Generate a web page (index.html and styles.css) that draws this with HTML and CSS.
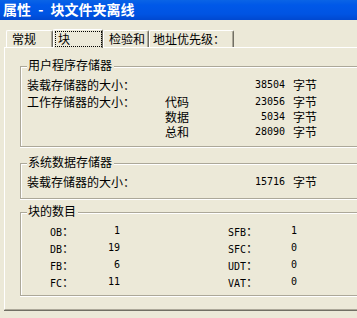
FILE: index.html
```html
<!DOCTYPE html>
<html lang="zh-CN">

<head>
  <meta charset="UTF-8" />
  <meta name="viewport" content="width=device-width, initial-scale=1.0" />
  <title>属性 - 块文件夹离线</title>
  <link rel="stylesheet" href="styles.css">
</head>

<body>
  <div class="titlebar">属性 - 块文件夹离线</div>

  <div class="tabs">
    <div class="tab tab-1">常规</div>
    <div class="tab tab-active"><span class="focus">块</span></div>
    <div class="tab tab-3">检验和</div>
    <div class="tab tab-4">地址优先级：</div>
  </div>

  <div class="panel">
    <div class="group group-user">
      <div class="legend">用户程序存储器</div>
      <div class="row row-first">
        <span>装载存储器的大小：</span><span></span><span class="num">38504</span><span class="unit">字节</span>
      </div>
      <div class="row row-work">
        <span>工作存储器的大小：</span><span>代码</span><span class="num">23056</span><span class="unit">字节</span>
      </div>
      <div class="row">
        <span></span><span>数据</span><span class="num">5034</span><span class="unit">字节</span>
      </div>
      <div class="row">
        <span></span><span>总和</span><span class="num">28090</span><span class="unit">字节</span>
      </div>
    </div>

    <div class="group group-sys">
      <div class="legend">系统数据存储器</div>
      <div class="row row-first">
        <span>装载存储器的大小：</span><span></span><span class="num">15716</span><span class="unit">字节</span>
      </div>
    </div>

    <div class="group group-blocks">
      <div class="legend">块的数目</div>
      <div class="counts">
        <span class="key"><span class="latin">OB</span>：</span><span class="num">1</span><span></span>
        <span class="key"><span class="latin">SFB</span>：</span><span class="num">1</span>

        <span class="key"><span class="latin">DB</span>：</span><span class="num">19</span><span></span>
        <span class="key"><span class="latin">SFC</span>：</span><span class="num">0</span>

        <span class="key"><span class="latin">FB</span>：</span><span class="num">6</span><span></span>
        <span class="key"><span class="latin">UDT</span>：</span><span class="num">0</span>

        <span class="key"><span class="latin">FC</span>：</span><span class="num">11</span><span></span>
        <span class="key"><span class="latin">VAT</span>：</span><span class="num">0</span>
      </div>
    </div>
  </div>

  <div class="buttons">
    <button class="btn btn-default">确定</button>
    <button class="btn btn-cancel">取消</button>
  </div>
</body>

</html>
```

FILE: styles.css
```css
body {
  margin: 0;
  width: 357px;
  height: 318px;
  overflow: hidden;
  background-color: #ece9d8;
  font-family: "Noto Sans CJK SC", sans-serif;
  font-size: 12px;
  color: #000;
}

.titlebar {
  height: 20px;
  padding-left: 3px;
  line-height: 19px;
  font-size: 14px;
  font-weight: bold;
  color: #fff;
  white-space: pre;
  word-spacing: 4px;
  background: linear-gradient(#0a64e6, #0058e8 25%, #0054e3 70%, #0048d0);
}

.tabs {
  display: flex;
  align-items: flex-end;
  height: 27px;
  padding-left: 6px;
}

.tab {
  box-sizing: border-box;
  height: 17px;
  padding-left: 5px;
  line-height: 15px;
  border-top: 1px solid #fff;
  border-left: 1px solid #fff;
  border-right: 1px solid #716f64;
  border-radius: 2px 2px 0 0;
  box-shadow: inset -1px 0 0 #aca899;
}

.tab-1 {
  width: 47px;
}

.tab-active {
  position: relative;
  z-index: 1;
  width: 50px;
  height: 19px;
  margin-bottom: -1px;
  padding-left: 0;
  background-color: #ece9d8;
}

.tab-3 {
  width: 46px;
}

.tab-4 {
  width: 85px;
  padding-left: 3px;
}

.focus {
  display: block;
  box-sizing: border-box;
  width: 47px;
  height: 16px;
  margin: 1px 0 0 1px;
  padding-left: 2px;
  line-height: 14px;
  border: 1px dotted #000;
}

.panel {
  width: 400px;
  margin-left: 4px;
  padding: 0 0 13px 0;
  border-top: 1px solid #fff;
  border-left: 1px solid #fff;
  border-bottom: 1px solid #aca899;
  box-shadow: 0 1px 0 #716f64;
}

.group {
  margin-left: 15px;
  padding: 0 0 7px 6px;
  border: 1px solid #aca899;
  border-right: none;
  box-shadow: inset 1px 1px 0 #fff, 0 1px 0 #fff;
}

.group-user {
  margin-top: 18px;
}

.group-sys {
  margin-top: 16px;
  padding-bottom: 9px;
}

.group-blocks {
  margin-top: 13px;
  padding-bottom: 4px;
}

.legend {
  width: fit-content;
  height: 14px;
  margin-top: -9px;
  padding: 0 2px 0 1px;
  line-height: 14px;
  background-color: #ece9d8;
}

.row {
  display: grid;
  grid-template-columns: 138px 50px 70px auto;
  line-height: 15px;
}

.row-first {
  margin-top: 5px;
}

.row-work {
  margin-top: 2px;
}

.num {
  text-align: right;
  font-family: "DejaVu Sans Mono", monospace;
  font-size: 10px;
}

.unit {
  padding-left: 8px;
}

.counts {
  display: grid;
  grid-template-columns: 30px 40px 108px 30px 39px;
  margin-top: 5px;
  padding-left: 23px;
  line-height: 15px;
}

.latin {
  font-family: "DejaVu Sans Mono", monospace;
  font-size: 10px;
}

.buttons {
  display: flex;
  margin-top: 8px;
  padding-left: 3px;
}

.btn {
  box-sizing: border-box;
  width: 75px;
  height: 23px;
  padding: 0;
  font-family: "Noto Sans CJK SC", sans-serif;
  font-size: 12px;
  background-color: #ece9d8;
  border: 1px solid #000;
  box-shadow: inset 1px 1px 0 #fff, inset -1px -1px 0 #716f64, inset -2px -2px 0 #aca899;
}

.btn-cancel {
  margin-left: 275px;
  border-color: #fff;
}
```
